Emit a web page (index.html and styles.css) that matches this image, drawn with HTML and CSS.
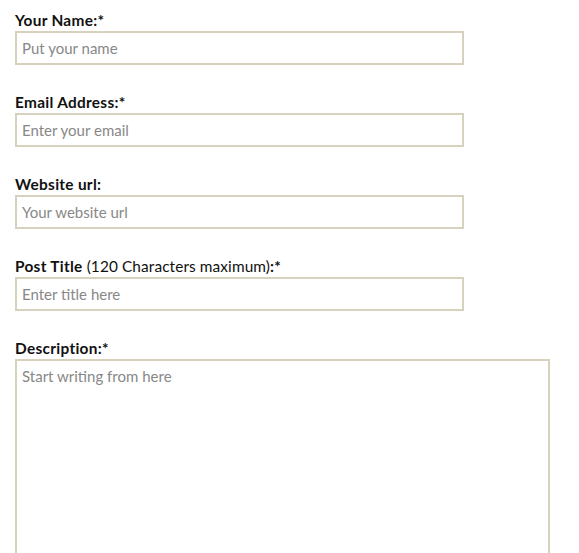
FILE: index.html
```html
<!DOCTYPE html>
<html>
<head>
<meta charset="utf-8">
<link rel="stylesheet" href="styles.css">
</head>
<body>
<form class="form">
  <div class="field">
    <label class="label" for="name">Your Name:*</label>
    <input class="input" id="name" type="text" placeholder="Put your name">
  </div>
  <div class="field">
    <label class="label" for="email">Email Address:*</label>
    <input class="input" id="email" type="text" placeholder="Enter your email">
  </div>
  <div class="field">
    <label class="label" for="url">Website url:</label>
    <input class="input" id="url" type="text" placeholder="Your website url">
  </div>
  <div class="field">
    <label class="label" for="title">Post Title <span class="note">(120 Characters maximum)</span>:*</label>
    <input class="input" id="title" type="text" placeholder="Enter title here">
  </div>
  <div class="field">
    <label class="label" for="desc">Description:*</label>
    <textarea class="textarea" id="desc" placeholder="Start writing from here"></textarea>
  </div>
</form>
</body>
</html>
```
FILE: styles.css
```css
html, body {
  margin: 0;
  padding: 0;
  background: #fff;
}
body {
  font-family: Lato, "Open Sans", sans-serif;
  color: #111;
  overflow: hidden;
}
.form {
  padding: 10px 15px 0;
}
.field {
  margin-bottom: 27px;
}
.label {
  display: block;
  font-size: 15.4px;
  font-weight: bold;
  letter-spacing: 0.3px;
  line-height: 20px;
  margin-bottom: 1px;
}
.note {
  font-weight: normal;
  letter-spacing: 0.1px;
}
.input, .textarea {
  display: block;
  box-sizing: border-box;
  border: 2px solid #d6d2bd;
  background: #fff;
  font-family: Lato, "Open Sans", sans-serif;
  font-size: 15px;
  color: #333;
  padding: 0 5px;
  margin: 0;
  outline: none;
}
.input {
  width: 449px;
  height: 34px;
}
.textarea {
  width: 535px;
  height: 260px;
  padding-top: 6px;
  resize: none;
}
.input::placeholder, .textarea::placeholder {
  color: #888;
  opacity: 1;
}
```
